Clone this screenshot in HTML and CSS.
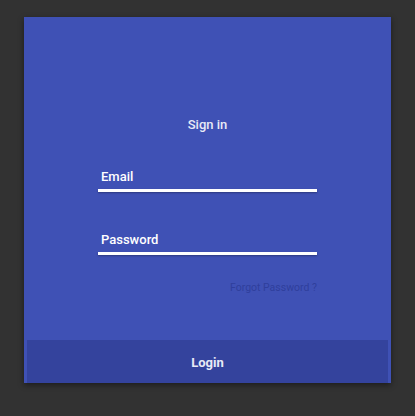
FILE: index.html
```html
<!DOCTYPE html>
<html>
<head>
<meta charset="utf-8">
<link rel="stylesheet" href="styles.css">
</head>
<body>
<div class="card">
  <div class="content">
    <div class="title">Sign in</div>
    <div class="field field-email">
      <div class="label">Email</div>
      <div class="line"></div>
    </div>
    <div class="field field-password">
      <div class="label">Password</div>
      <div class="line"></div>
    </div>
    <div class="forgot">Forgot Password ?</div>
  </div>
  <div class="footer">Login</div>
</div>
</body>
</html>
```
FILE: styles.css
```css
html, body {
  margin: 0;
  padding: 0;
}
body {
  background: #323232;
  width: 415px;
  height: 416px;
  font-family: Roboto, "Noto Sans", sans-serif;
  overflow: hidden;
}
.card {
  margin: 17px 24px 0 24px;
  width: 367px;
  height: 366px;
  background: #3f51b5;
  box-shadow: 0 2px 6px rgba(0,0,0,0.45);
  display: flex;
  flex-direction: column;
}
.content {
  flex: 1;
  display: flex;
  flex-direction: column;
  align-items: center;
  padding-top: 100px;
}
.title {
  color: #e8eaf6;
  font-size: 13px;
  font-weight: 500;
  line-height: 16px;
}
.field {
  width: 219px;
  display: flex;
  flex-direction: column;
}
.field-email {
  margin-top: 36px;
}
.field-password {
  margin-top: 40px;
}
.label {
  color: #ffffff;
  font-size: 13px;
  font-weight: 500;
  line-height: 16px;
  padding-left: 3px;
}
.line {
  margin-top: 4px;
  height: 3px;
  background: #ffffff;
  box-shadow: 0 1px 2px rgba(0,0,0,0.3);
}
.forgot {
  margin-top: 26px;
  width: 219px;
  text-align: right;
  color: #2f3f9c;
  font-size: 10.5px;
  line-height: 14px;
}
.footer {
  margin: 0 3px;
  height: 43px;
  padding-top: 2px;
  box-sizing: border-box;
  background: #34439d;
  color: #e8eaf6;
  font-size: 13px;
  font-weight: 700;
  display: flex;
  align-items: center;
  justify-content: center;
}
```
